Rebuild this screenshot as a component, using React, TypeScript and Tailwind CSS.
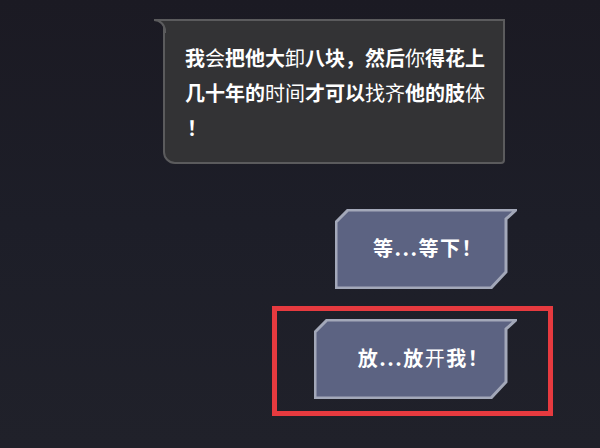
const cjk = { fontFamily: '"Noto Sans CJK SC", "Noto Sans", sans-serif' };

const Light = ({ children }: { children: string }) => (
  <span className="font-normal">{children}</span>
);

const ChamferButton = ({ label, width, pad }: { label: React.ReactNode; width: number; pad: string }) => {
  const h = 80;
  const body = width - 11;
  const points = `1,13 13,1 ${width - 1},1 ${body},10 ${body},${h - 17} ${body - 15},${h - 1} 1,${h - 1}`;
  return (
    <div className="relative h-[80px]" style={{ width }}>
      <svg className="absolute inset-0" width={width} height={h} viewBox={`0 0 ${width} ${h}`}>
        <polygon points={points} fill="#5c6382" stroke="#a3a8b9" strokeWidth="3" strokeLinejoin="miter" />
      </svg>
      <div
        className={`relative flex h-full items-center justify-center pb-[2px] text-[20px] font-bold text-white tracking-[1.5px] ${pad}`}
        style={cjk}
      >
        {label}
      </div>
    </div>
  );
};

export default function App() {
  return (
    <div className="relative flex h-[448px] w-[600px] flex-col overflow-hidden bg-linear-to-b from-[#1b1a23] via-[#1d1e28] to-[#20212a]">
      {/* speech bubble */}
      <div className="relative ml-[163px] mt-[19px] w-[342px] rounded-bl-[12px] rounded-br-[4px] border-2 border-[#5b5b5d] bg-[#333335] pl-[20px] pt-[19px] pb-[17px] text-[20px] font-bold leading-[35px] text-white" style={cjk}>
        <svg className="absolute left-[-12px] top-[-2px]" width="14" height="14" viewBox="0 0 14 14">
          <path d="M1,1 A11,11 0 0 1 12,12 L12,14 L14,14 L14,1 Z" fill="#333335" />
          <path d="M14,1 L1,1 A11,11 0 0 1 12,12 L12,14" fill="none" stroke="#5b5b5d" strokeWidth="2" />
        </svg>
        <div>我<Light>会</Light>把他大<Light>卸</Light>八块，然后<Light>你</Light>得花上</div>
        <div>几十年的<Light>时</Light><Light>间</Light>才可以<Light>找</Light><Light>齐</Light>他的肢<Light>体</Light></div>
        <div className="pl-[2px]">！</div>
      </div>

      <div className="ml-[335px] mt-[45px]">
        <ChamferButton width={182} pad="pl-[4px]" label={<>等...等下！</>} />
      </div>

      <div className="ml-[272px] mt-[17px] h-[110px] w-[281px] border-[5px] border-[#e63a3f] pl-[37px] pt-[8px]">
        <ChamferButton width={203} pad="pl-[16px]" label={<>放...放<Light>开</Light>我！</>} />
      </div>
    </div>
  );
}
